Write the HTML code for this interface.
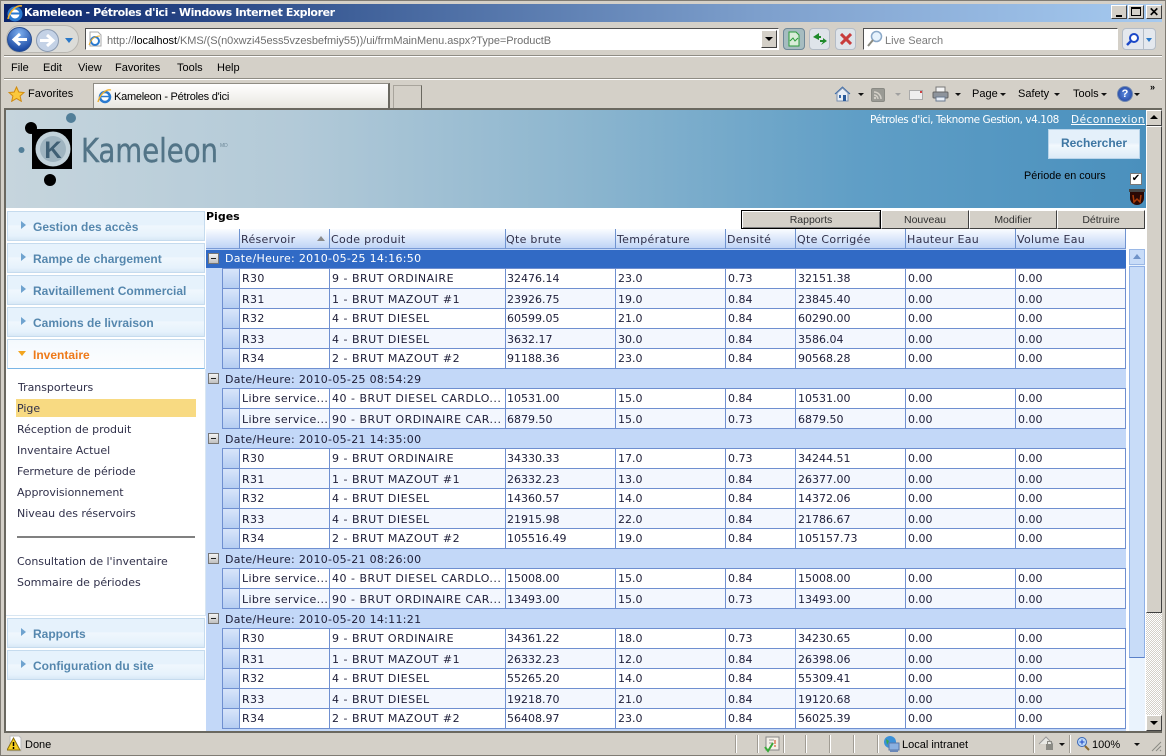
<!DOCTYPE html>
<html><head><meta charset="utf-8"><style>
*{box-sizing:border-box}
html,body{margin:0;padding:0;width:1166px;height:756px;overflow:hidden;background:#d4d0c8}
body{position:relative;font:11px "Liberation Sans",sans-serif;color:#000}
.a{position:absolute}
.t{position:absolute;white-space:nowrap;line-height:14px}
.menu{position:absolute;left:7px;width:198px;height:30px;background:linear-gradient(#e6f2fc 0,#e6f2fc 45%,#f0f7fd 50%,#e6f2fc 85%,#d8e8f6 100%);border:1px solid #c5dbee;font:bold 12px "Liberation Sans",sans-serif;color:#5587ae;padding:8px 0 0 25px;line-height:14px}
.menu:before{content:"";position:absolute;left:13px;top:9px;border-left:5px solid #6fa3cf;border-top:4px solid transparent;border-bottom:4px solid transparent}
.sub{position:absolute;left:17px;font:11px "DejaVu Sans",sans-serif;letter-spacing:-.03px;color:#30304a;line-height:14px;white-space:nowrap}
.btn{position:absolute;top:210px;height:19px;background:#d4d0c8;border:1px solid;border-color:#fff #404040 #404040 #fff;text-align:center;font:10.5px/19px "Liberation Sans",sans-serif;color:#303030}
.h{position:absolute;top:229px;height:20px;background:linear-gradient(#fafcff,#bfd4f6);border-right:1px solid #6f93d0;border-bottom:1px solid #7a9bd6;font:11px/21px "DejaVu Sans",sans-serif;letter-spacing:.3px;color:#30304a;padding-left:1px;white-space:nowrap}
.g{position:absolute;left:206px;width:920px;height:20px;background:#c3d8f8;font:11px/22px "DejaVu Sans",sans-serif;letter-spacing:.3px;color:#20203a;padding-left:19px;white-space:nowrap}
.g i{position:absolute;left:2px;top:4px;width:11px;height:11px;background:linear-gradient(#f4f4f4,#c0c0c0);border:1px solid #777}
.g i:after{content:"";position:absolute;left:2px;top:4px;width:5px;height:1px;background:#222}
.g.s{background:#316ac5;color:#fff;border-top:1px solid #c3d8f8;border-bottom:1px solid #c3d8f8;line-height:18px}
.g.s i{top:3px}
.r{position:absolute;left:222px;width:904px;height:20px;background:#fff;border-bottom:1px solid #6f8fd0;font:11px/19px "DejaVu Sans",sans-serif;color:#20203a;white-space:nowrap}
.r.o{background:#f3f7fe;line-height:21px}
.r b{font-weight:normal;position:absolute;top:0;height:19px;border-left:1px solid #6f8fd0;padding-left:2px;overflow:hidden}
.r b:nth-child(1){left:0;width:17px;padding:0;background:linear-gradient(#d8e5fa,#b5cdf2)}
.r b:nth-child(2){left:17px;width:90px;letter-spacing:.35px}
.r b:nth-child(3){left:107px;width:176px;letter-spacing:.5px}
.r b:nth-child(4){left:283px;width:110px;padding-left:1px}
.r b:nth-child(5){left:393px;width:110px}
.r b:nth-child(6){left:503px;width:70px}
.r b:nth-child(7){left:573px;width:110px}
.r b:nth-child(8){left:683px;width:110px}
.r b:nth-child(9){left:793px;width:111px;border-right:1px solid #6f8fd0}
.sep{position:absolute;top:735px;width:2px;height:18px;border-left:1px solid #a09c94;border-right:1px solid #fff}
</style></head><body>

<!-- Title bar -->
<div class="a" style="left:4px;top:4px;width:1158px;height:18px;background:linear-gradient(90deg,#0a246a,#3f6099 30%,#7d9fcc 65%,#a6caf0)"></div>
<svg class="a" style="left:6px;top:4px" width="18" height="18" viewBox="0 0 18 18"><circle cx="9" cy="10" r="6" fill="#fff" stroke="#2a7ad0" stroke-width="3"/><path d="M5 9.500h9" stroke="#2a7ad0" stroke-width="2"/><path d="M2 15C4 6 11 1 16 2" fill="none" stroke="#f0b030" stroke-width="1.600"/></svg>
<div class="t" style="left:24px;top:6px;color:#fff;font:bold 11px/14px 'DejaVu Sans',sans-serif;letter-spacing:-.42px">Kameleon - Pétroles d'ici - Windows Internet Explorer</div>
<div class="a" style="left:1111px;top:5px;width:16px;height:14px;background:#d4d0c8;border:1px solid;border-color:#fff #404040 #404040 #fff"><div class="a" style="left:4px;top:9px;width:6px;height:2px;background:#000"></div></div>
<div class="a" style="left:1128px;top:5px;width:16px;height:14px;background:#d4d0c8;border:1px solid;border-color:#fff #404040 #404040 #fff"><div class="a" style="left:2px;top:1px;width:10px;height:9px;border:1px solid #000;border-top-width:2px"></div></div>
<div class="a" style="left:1146px;top:5px;width:16px;height:14px;background:#d4d0c8;border:1px solid;border-color:#fff #404040 #404040 #fff;font:bold 12px/12px 'Liberation Sans',sans-serif;text-align:center">✕</div>

<!-- Nav -->
<div class="a" style="left:6px;top:25px;width:73px;height:28px;border-radius:14px;background:#dcdcd8;border:1px solid #b8b6b0"></div>
<svg class="a" style="left:7px;top:27px" width="25" height="25" viewBox="0 0 25 25"><defs><radialGradient id="b1" cx=".5" cy=".25" r=".8"><stop offset="0" stop-color="#7fb0ee"/><stop offset="1" stop-color="#0c3a98"/></radialGradient></defs><circle cx="12.500" cy="12.500" r="12" fill="url(#b1)" stroke="#2a4f90"/><path d="M20 12.500H8M13 7l-6 5.500 6 5.500" fill="none" stroke="#fff" stroke-width="3"/></svg>
<svg class="a" style="left:36px;top:29px" width="23" height="23" viewBox="0 0 23 23"><circle cx="11.500" cy="11.500" r="11" fill="#c4d2e6" stroke="#8a9ab0"/><path d="M4 11.500h12M11 6l6 5.500-6 5.500" fill="none" stroke="#fff" stroke-width="3"/></svg>
<div class="a" style="left:65px;top:38px;border-top:5px solid #2a78c8;border-left:4px solid transparent;border-right:4px solid transparent"></div>
<div class="a" style="left:85px;top:28px;width:694px;height:22px;background:#fff;border:1px solid;border-color:#505050 #fff #fff #505050"></div>
<svg class="a" style="left:87px;top:31px" width="16" height="16" viewBox="0 0 16 16"><path d="M3 1h8l3 3v11H3z" fill="#fff" stroke="#aaa"/><circle cx="8" cy="10" r="4" fill="none" stroke="#2a7ad0" stroke-width="2"/><path d="M2 14C4 8 8 5 13 5" stroke="#f0b030" fill="none"/></svg>
<div class="t" style="left:107px;top:34px;color:#6e6e6e;font-size:11px;letter-spacing:-.06px">http://<span style="color:#000">localhost</span>/KMS/(S(n0xwzi45ess5vzesbefmiy55))/ui/frmMainMenu.aspx?Type=ProductB</div>
<div class="a" style="left:761px;top:30px;width:16px;height:18px;background:#d4d0c8;border:1px solid;border-color:#fff #404040 #404040 #fff"><div class="a" style="left:3px;top:6px;border-top:4px solid #000;border-left:4px solid transparent;border-right:4px solid transparent"></div></div>
<div class="a" style="left:783px;top:28px;width:22px;height:22px;border-radius:4px;background:#a6bcc0;border:1px solid #6f8898"></div>
<svg class="a" style="left:787px;top:31px" width="14" height="16" viewBox="0 0 14 16"><path d="M2 1h7l3 3v11H2z" fill="#d8ecd8" stroke="#2a9a3a"/><path d="M3 10l3-3 2 3 3-3" stroke="#2a9a3a" fill="none"/></svg>
<div class="a" style="left:809px;top:28px;width:21px;height:22px;border-radius:4px;background:#dfe4ea;border:1px solid #b4bcc6"></div>
<svg class="a" style="left:812px;top:32px" width="16" height="14" viewBox="0 0 16 14"><path d="M7 1L1 5l6 3V6h2V4H7zM9 13l6-4-4-3v2H8v2h3z" fill="#1e8a2a"/></svg>
<div class="a" style="left:835px;top:28px;width:21px;height:22px;border-radius:4px;background:#dfe4ea;border:1px solid #b4bcc6"></div>
<svg class="a" style="left:840px;top:33px" width="12" height="12" viewBox="0 0 12 12"><path d="M1 1l10 10M11 1L1 11" stroke="#c83c3c" stroke-width="3"/></svg>
<div class="a" style="left:863px;top:28px;width:255px;height:22px;background:#fff;border:1px solid;border-color:#505050 #fff #fff #505050"></div>
<svg class="a" style="left:866px;top:30px" width="17" height="18" viewBox="0 0 17 18"><circle cx="10.500" cy="6.500" r="5" fill="#e6f2fc" stroke="#8aa8c8" stroke-width="1.500"/><path d="M7 10l-5 6" stroke="#8a8a80" stroke-width="2"/></svg>
<div class="t" style="left:885px;top:34px;color:#7a7a7a;font-size:11px">Live Search</div>
<div class="a" style="left:1122px;top:28px;width:34px;height:22px;border-radius:4px;background:#e4e8ee;border:1px solid #b4bcc6"></div>
<div class="a" style="left:1143px;top:29px;width:1px;height:20px;background:#b4bcc6"></div>
<svg class="a" style="left:1125px;top:32px" width="15" height="15" viewBox="0 0 15 15"><circle cx="9" cy="6" r="4" fill="#fff" stroke="#1c48c8" stroke-width="2"/><path d="M6 9l-4 4" stroke="#1c48c8" stroke-width="2.500"/></svg>
<div class="a" style="left:1146px;top:38px;border-top:4px solid #2a78c8;border-left:3px solid transparent;border-right:3px solid transparent"></div>
<div class="a" style="left:4px;top:55px;width:1158px;height:2px;border-top:1px solid #8f8c84;border-bottom:1px solid #fff"></div>

<!-- Menu bar -->
<div class="t" style="left:11px;top:61px">File</div>
<div class="t" style="left:43px;top:61px">Edit</div>
<div class="t" style="left:78px;top:61px">View</div>
<div class="t" style="left:115px;top:61px">Favorites</div>
<div class="t" style="left:177px;top:61px">Tools</div>
<div class="t" style="left:217px;top:61px">Help</div>
<div class="a" style="left:4px;top:78px;width:1158px;height:2px;border-top:1px solid #8f8c84;border-bottom:1px solid #fff"></div>

<!-- Favorites bar -->
<svg class="a" style="left:8px;top:86px" width="17" height="16" viewBox="0 0 17 16"><path d="M8.500 1l2.300 5 5.200.5-3.900 3.500 1.200 5.300-4.800-2.800-4.800 2.800 1.200-5.300L1 6.500 6.200 6z" fill="#fbc83c" stroke="#d08a10"/></svg>
<div class="t" style="left:28px;top:87px">Favorites</div>
<div class="a" style="left:93px;top:83px;width:297px;height:25px;background:linear-gradient(#fff,#e8e6e0);border:1px solid #8f8c84;border-bottom:none;border-right:2px solid #6a6860"></div>
<svg class="a" style="left:97px;top:88px" width="16" height="16" viewBox="0 0 16 16"><circle cx="8" cy="9" r="5" fill="#fff" stroke="#2a7ad0" stroke-width="2.500"/><path d="M4 8.500h8" stroke="#2a7ad0" stroke-width="1.500"/><path d="M1 14C3 6 9 1 14 2" fill="none" stroke="#f0b030" stroke-width="1.400"/></svg>
<div class="t" style="left:114px;top:90px;letter-spacing:-.25px">Kameleon - Pétroles d'ici</div>
<div class="a" style="left:393px;top:85px;width:29px;height:23px;background:#d4d0c8;border:1px solid #a8a49c;border-bottom:none;border-right-color:#6a6860"></div>
<svg class="a" style="left:834px;top:85px" width="17" height="17" viewBox="0 0 17 17"><path d="M1 9l7.500-7L16 9" fill="#8ab0e0" stroke="#3a6aa8"/><path d="M3 8v8h11V8L8.500 3z" fill="#e8eef6" stroke="#7a90b0"/><rect x="9" y="10" width="3" height="6" fill="#2a5a9a"/><rect x="5" y="10" width="2" height="3" fill="#3a6aa8"/></svg>
<div class="a" style="left:858px;top:93px;border-top:3px solid #111;border-left:3px solid transparent;border-right:3px solid transparent"></div>
<div class="a" style="left:871px;top:88px;width:14px;height:14px;background:#9a9a94;border-radius:2px;border:1px solid #8a8a84"></div>
<svg class="a" style="left:872px;top:89px" width="12" height="12" viewBox="0 0 12 12"><path d="M2 3a7 7 0 0 1 7 7M2 6a4 4 0 0 1 4 4" fill="none" stroke="#d4d0c8" stroke-width="1.500"/><circle cx="3" cy="9" r="1.200" fill="#d4d0c8"/></svg>
<div class="a" style="left:895px;top:93px;border-top:3px solid #a0a0a0;border-left:3px solid transparent;border-right:3px solid transparent"></div>
<div class="a" style="left:909px;top:90px;width:14px;height:10px;background:#eee;border:1px solid #aaa"><div class="a" style="right:0;top:0;width:2px;height:2px;background:#d04040"></div></div>
<svg class="a" style="left:932px;top:86px" width="17" height="16" viewBox="0 0 17 16"><rect x="4" y="1" width="9" height="5" fill="#f4f4f4" stroke="#777"/><rect x="1" y="6" width="15" height="6" rx="1" fill="#8e949c" stroke="#666"/><rect x="4" y="11" width="9" height="4" fill="#e8eef6" stroke="#6a7a90"/></svg>
<div class="a" style="left:955px;top:93px;border-top:3px solid #111;border-left:3px solid transparent;border-right:3px solid transparent"></div>
<div class="t" style="left:972px;top:87px">Page</div><div class="a" style="left:1000px;top:93px;border-top:3px solid #111;border-left:3px solid transparent;border-right:3px solid transparent"></div>
<div class="t" style="left:1018px;top:87px">Safety</div><div class="a" style="left:1054px;top:93px;border-top:3px solid #111;border-left:3px solid transparent;border-right:3px solid transparent"></div>
<div class="t" style="left:1073px;top:87px">Tools</div><div class="a" style="left:1101px;top:93px;border-top:3px solid #111;border-left:3px solid transparent;border-right:3px solid transparent"></div>
<div class="a" style="left:1117px;top:86px;width:16px;height:16px;border-radius:50%;background:radial-gradient(#5a8ae0,#1c3c98);border:1px solid #7088b0;color:#fff;font:bold 11px/14px 'Liberation Sans',sans-serif;text-align:center">?</div>
<div class="a" style="left:1134px;top:93px;border-top:3px solid #111;border-left:3px solid transparent;border-right:3px solid transparent"></div>
<div class="t" style="left:1150px;top:81px;font:bold 9px/12px 'Liberation Sans',sans-serif">»</div>

<!-- Page -->
<div class="a" style="left:4px;top:108px;width:1158px;height:2px;background:#6a6860"></div>
<div class="a" style="left:4px;top:110px;width:2px;height:621px;background:#6a6860"></div>
<div class="a" style="left:6px;top:110px;width:1140px;height:621px;background:#fff"></div>
<div class="a" style="left:6px;top:110px;width:1140px;height:98px;background:linear-gradient(90deg,#c6d5dd 0,#b3cad8 25%,#8db6cf 50%,#5f9ec6 75%,#4a90bd 100%)"></div>

<!-- Logo -->
<svg class="a" style="left:6px;top:110px" width="230" height="80" viewBox="0 0 230 80">
<rect x="26" y="19" width="40" height="40" fill="#000"/>
<circle cx="25" cy="18" r="6" fill="#000"/>
<circle cx="65" cy="8" r="5" fill="#527f99"/>
<circle cx="15.500" cy="40" r="3" fill="#527f99"/>
<circle cx="47" cy="39" r="17.500" fill="#c2d2da"/>
<circle cx="47" cy="39" r="13" fill="#9fb4c0"/>
<text x="47" y="48" font-family="Liberation Sans,sans-serif" font-size="24" font-weight="bold" fill="#3f5f74" text-anchor="middle">K</text>
<text x="75" y="52" font-family="DejaVu Sans,sans-serif" font-size="33" fill="#527487" stroke="#527487" stroke-width=".4" textLength="137" lengthAdjust="spacingAndGlyphs">Kameleon</text>
<text x="214" y="37" font-family="Liberation Sans,sans-serif" font-size="5" fill="#6f8a9a">MD</text>
</svg>
<div class="a" style="left:44px;top:174px;width:12px;height:12px;border-radius:50%;background:#000"></div>

<div class="t" style="left:870px;top:113px;color:#fff;font:10.500px/14px 'DejaVu Sans',sans-serif;letter-spacing:-.45px">Pétroles d'ici, Teknome Gestion, v4.108</div>
<div class="t" style="left:1071px;top:113px;color:#fff;font:10.500px/14px 'DejaVu Sans',sans-serif;letter-spacing:.5px;text-decoration:underline">Déconnexion</div>
<div class="a" style="left:1048px;top:129px;width:92px;height:30px;background:linear-gradient(#e4f0fa,#e4f0fa 45%,#f2f8fd 55%,#dcebf7);border:1px solid #b8d4ea;text-align:center;font:bold 12px/27px 'Liberation Sans',sans-serif;color:#3f77a3">Rechercher</div>
<div class="t" style="left:1024px;top:169px;font-size:10.800px">Période en cours</div>
<div class="a" style="left:1130px;top:173px;width:12px;height:12px;background:#fff;border:1px solid #777;font:bold 10px/10px 'DejaVu Sans',sans-serif;text-align:center">✔</div>
<svg class="a" style="left:1129px;top:189px" width="16" height="17" viewBox="0 0 16 17"><path d="M1 1h14v8a7 7 0 0 1-14 0z" fill="#2a0804"/><path d="M0 0h16v3H0z" fill="#444"/><path d="M4 6l1 7 3-3 3 3 1-7" fill="none" stroke="#a83a08" stroke-width="1.500"/></svg>

<!-- Sidebar -->
<div class="menu" style="top:211px">Gestion des accès</div>
<div class="menu" style="top:243px">Rampe de chargement</div>
<div class="menu" style="top:275px">Ravitaillement Commercial</div>
<div class="menu" style="top:307px">Camions de livraison</div>
<div class="a" style="left:7px;top:339px;width:198px;height:30px;background:linear-gradient(#f4f9fd,#fdfeff);border:1px solid #c5dbee;border-bottom:1px solid #7ab6e6;font:bold 12px/30px 'Liberation Sans',sans-serif;color:#ee7a1a;padding-left:25px">Inventaire</div>
<div class="a" style="left:18px;top:351px;border-top:5px solid #f2a520;border-left:4px solid transparent;border-right:4px solid transparent"></div>
<div class="a" style="left:6px;top:369px;width:200px;height:247px;border:1px solid #d8e6f2;border-top:none;border-left:none;background:#fff"></div>
<div class="a" style="left:16px;top:399px;width:180px;height:18px;background:#f8da82"></div>
<div class="sub" style="top:381px;left:18px">Transporteurs</div>
<div class="sub" style="top:402px">Pige</div>
<div class="sub" style="top:423px">Réception de produit</div>
<div class="sub" style="top:444px">Inventaire Actuel</div>
<div class="sub" style="top:465px">Fermeture de période</div>
<div class="sub" style="top:486px">Approvisionnement</div>
<div class="sub" style="top:507px">Niveau des réservoirs</div>
<div class="a" style="left:17px;top:536px;width:178px;height:2px;background:#808080"></div>
<div class="sub" style="top:555px">Consultation de l'inventaire</div>
<div class="sub" style="top:576px">Sommaire de périodes</div>
<div class="menu" style="top:618px">Rapports</div>
<div class="menu" style="top:650px">Configuration du site</div>

<!-- Pages toolbar -->
<div class="t" style="left:206px;top:210px;font:bold 11px/14px 'DejaVu Sans',sans-serif">Piges</div>
<div class="btn" style="left:741px;width:140px;border:1px solid #000;box-shadow:inset 1px 1px 0 #fff,inset -1px -1px 0 #808080">Rapports</div>
<div class="btn" style="left:881px;width:88px">Nouveau</div>
<div class="btn" style="left:969px;width:88px">Modifier</div>
<div class="btn" style="left:1057px;width:88px">Détruire</div>

<!-- Grid -->
<div class="a" style="left:206px;top:229px;width:923px;height:502px;background:#c3d8f8"></div>
<div class="a" style="left:1126px;top:229px;width:20px;height:502px;background:#fff"></div>
<div class="h" style="left:206px;width:34px"></div>
<div class="h" style="left:240px;width:90px">Réservoir</div>
<div class="a" style="left:317px;top:236px;border-bottom:5px solid #8a8a8a;border-left:4px solid transparent;border-right:4px solid transparent"></div>
<div class="h" style="left:330px;width:176px">Code produit</div>
<div class="h" style="left:506px;width:110px;padding-left:0">Qte brute</div>
<div class="h" style="left:616px;width:110px">Température</div>
<div class="h" style="left:726px;width:70px">Densité</div>
<div class="h" style="left:796px;width:110px">Qte Corrigée</div>
<div class="h" style="left:906px;width:110px">Hauteur Eau</div>
<div class="h" style="left:1016px;width:110px">Volume Eau</div>

<div class="g s" style="top:249px"><i></i>Date/Heure: 2010-05-25 14:16:50</div>
<div class="r" style="top:269px"><b></b><b>R30</b><b>9 - BRUT ORDINAIRE</b><b>32476.14</b><b>23.0</b><b>0.73</b><b>32151.38</b><b>0.00</b><b>0.00</b></div>
<div class="r o" style="top:289px"><b></b><b>R31</b><b>1 - BRUT MAZOUT #1</b><b>23926.75</b><b>19.0</b><b>0.84</b><b>23845.40</b><b>0.00</b><b>0.00</b></div>
<div class="r" style="top:309px"><b></b><b>R32</b><b>4 - BRUT DIESEL</b><b>60599.05</b><b>21.0</b><b>0.84</b><b>60290.00</b><b>0.00</b><b>0.00</b></div>
<div class="r o" style="top:329px"><b></b><b>R33</b><b>4 - BRUT DIESEL</b><b>3632.17</b><b>30.0</b><b>0.84</b><b>3586.04</b><b>0.00</b><b>0.00</b></div>
<div class="r" style="top:349px"><b></b><b>R34</b><b>2 - BRUT MAZOUT #2</b><b>91188.36</b><b>23.0</b><b>0.84</b><b>90568.28</b><b>0.00</b><b>0.00</b></div>

<div class="g" style="top:369px"><i></i>Date/Heure: 2010-05-25 08:54:29</div>
<div class="r" style="top:389px"><b></b><b>Libre service...</b><b>40 - BRUT DIESEL CARDLO...</b><b>10531.00</b><b>15.0</b><b>0.84</b><b>10531.00</b><b>0.00</b><b>0.00</b></div>
<div class="r o" style="top:409px"><b></b><b>Libre service...</b><b>90 - BRUT ORDINAIRE CAR...</b><b>6879.50</b><b>15.0</b><b>0.73</b><b>6879.50</b><b>0.00</b><b>0.00</b></div>

<div class="g" style="top:429px"><i></i>Date/Heure: 2010-05-21 14:35:00</div>
<div class="r" style="top:449px"><b></b><b>R30</b><b>9 - BRUT ORDINAIRE</b><b>34330.33</b><b>17.0</b><b>0.73</b><b>34244.51</b><b>0.00</b><b>0.00</b></div>
<div class="r o" style="top:469px"><b></b><b>R31</b><b>1 - BRUT MAZOUT #1</b><b>26332.23</b><b>13.0</b><b>0.84</b><b>26377.00</b><b>0.00</b><b>0.00</b></div>
<div class="r" style="top:489px"><b></b><b>R32</b><b>4 - BRUT DIESEL</b><b>14360.57</b><b>14.0</b><b>0.84</b><b>14372.06</b><b>0.00</b><b>0.00</b></div>
<div class="r o" style="top:509px"><b></b><b>R33</b><b>4 - BRUT DIESEL</b><b>21915.98</b><b>22.0</b><b>0.84</b><b>21786.67</b><b>0.00</b><b>0.00</b></div>
<div class="r" style="top:529px"><b></b><b>R34</b><b>2 - BRUT MAZOUT #2</b><b>105516.49</b><b>19.0</b><b>0.84</b><b>105157.73</b><b>0.00</b><b>0.00</b></div>

<div class="g" style="top:549px"><i></i>Date/Heure: 2010-05-21 08:26:00</div>
<div class="r" style="top:569px"><b></b><b>Libre service...</b><b>40 - BRUT DIESEL CARDLO...</b><b>15008.00</b><b>15.0</b><b>0.84</b><b>15008.00</b><b>0.00</b><b>0.00</b></div>
<div class="r o" style="top:589px"><b></b><b>Libre service...</b><b>90 - BRUT ORDINAIRE CAR...</b><b>13493.00</b><b>15.0</b><b>0.73</b><b>13493.00</b><b>0.00</b><b>0.00</b></div>

<div class="g" style="top:609px"><i></i>Date/Heure: 2010-05-20 14:11:21</div>
<div class="r" style="top:629px"><b></b><b>R30</b><b>9 - BRUT ORDINAIRE</b><b>34361.22</b><b>18.0</b><b>0.73</b><b>34230.65</b><b>0.00</b><b>0.00</b></div>
<div class="r o" style="top:649px"><b></b><b>R31</b><b>1 - BRUT MAZOUT #1</b><b>26332.23</b><b>12.0</b><b>0.84</b><b>26398.06</b><b>0.00</b><b>0.00</b></div>
<div class="r" style="top:669px"><b></b><b>R32</b><b>4 - BRUT DIESEL</b><b>55265.20</b><b>14.0</b><b>0.84</b><b>55309.41</b><b>0.00</b><b>0.00</b></div>
<div class="r o" style="top:689px"><b></b><b>R33</b><b>4 - BRUT DIESEL</b><b>19218.70</b><b>21.0</b><b>0.84</b><b>19120.68</b><b>0.00</b><b>0.00</b></div>
<div class="r" style="top:709px"><b></b><b>R34</b><b>2 - BRUT MAZOUT #2</b><b>56408.97</b><b>23.0</b><b>0.84</b><b>56025.39</b><b>0.00</b><b>0.00</b></div>
<div class="a" style="left:222px;top:268px;width:904px;height:1px;background:#6f8fd0"></div>
<div class="a" style="left:222px;top:388px;width:904px;height:1px;background:#6f8fd0"></div>
<div class="a" style="left:222px;top:448px;width:904px;height:1px;background:#6f8fd0"></div>
<div class="a" style="left:222px;top:568px;width:904px;height:1px;background:#6f8fd0"></div>
<div class="a" style="left:222px;top:628px;width:904px;height:1px;background:#6f8fd0"></div>

<!-- Inner scrollbar -->
<div class="a" style="left:1129px;top:249px;width:16px;height:482px;background:#eaf3fd"></div>
<div class="a" style="left:1129px;top:249px;width:16px;height:16px;background:#c8dcf8;border:1px solid #9ab8e6"><div class="a" style="left:3px;top:4px;border-bottom:5px solid #6f93c8;border-left:4px solid transparent;border-right:4px solid transparent"></div></div>
<div class="a" style="left:1129px;top:266px;width:16px;height:392px;background:#c8dcf8;border:1px solid #8fb0e6;border-bottom:1px solid #5a80c8"></div>

<!-- Outer scrollbar -->
<div class="a" style="left:1146px;top:110px;width:16px;height:621px;background:repeating-conic-gradient(#d4d0c8 0 25%,#fff 0 50%) 0 0/2px 2px"></div>
<div class="a" style="left:1146px;top:110px;width:16px;height:16px;background:#d4d0c8;border:1px solid;border-color:#fff #404040 #404040 #fff"><div class="a" style="left:3px;top:4px;border-bottom:4px solid #000;border-left:4px solid transparent;border-right:4px solid transparent"></div></div>
<div class="a" style="left:1146px;top:126px;width:16px;height:487px;background:#d4d0c8;border:1px solid;border-color:#fff #404040 #404040 #fff"></div>
<div class="a" style="left:1146px;top:715px;width:16px;height:16px;background:#d4d0c8;border:1px solid;border-color:#fff #404040 #404040 #fff"><div class="a" style="left:3px;top:5px;border-top:4px solid #000;border-left:4px solid transparent;border-right:4px solid transparent"></div></div>

<!-- Status bar -->
<div class="a" style="left:4px;top:731px;width:1158px;height:2px;background:#6a6860"></div>
<svg class="a" style="left:7px;top:735px" width="15" height="17" viewBox="0 0 15 17"><path d="M3 1h9l2 2v13H3z" fill="#fff" stroke="#bbb"/><path d="M6.500 3L13 15H0z" fill="#f7d020" stroke="#8a7010"/><path d="M6.500 7v4M6.500 12v2" stroke="#000" stroke-width="1.500"/></svg>
<div class="t" style="left:25px;top:738px">Done</div>
<div class="sep" style="left:735px"></div><div class="sep" style="left:757px"></div>
<svg class="a" style="left:763px;top:736px" width="17" height="17" viewBox="0 0 17 17"><rect x="3" y="1" width="13" height="13" fill="#f4f0e8" stroke="#888"/><path d="M6 4h5M6 7h4" stroke="#999"/><path d="M12 4v4M12 9v2" stroke="#d04010"/><path d="M2 11l3 4 5-8" fill="none" stroke="#38a838" stroke-width="2"/></svg>
<div class="sep" style="left:783px"></div><div class="sep" style="left:805px"></div><div class="sep" style="left:829px"></div><div class="sep" style="left:853px"></div><div class="sep" style="left:877px"></div>
<svg class="a" style="left:883px;top:735px" width="17" height="18" viewBox="0 0 17 18"><circle cx="7" cy="7" r="6" fill="#3a90d8"/><path d="M3 4l3 2-2 4z" fill="#3aa84a"/><rect x="6" y="8" width="10" height="7" fill="#8ab0e0" stroke="#5a78a8"/><rect x="7" y="15" width="8" height="2" fill="#6a88b8"/></svg>
<div class="t" style="left:902px;top:738px">Local intranet</div>
<div class="sep" style="left:1033px"></div>
<svg class="a" style="left:1038px;top:736px" width="18" height="16" viewBox="0 0 18 16"><path d="M1 8l7-7 7 7" fill="#e8e8e4" stroke="#999"/><rect x="8" y="8" width="7" height="6" fill="#8a8a84"/><path d="M9.500 8V5.500h4V8" fill="none" stroke="#8a8a84"/></svg>
<div class="a" style="left:1059px;top:743px;border-top:3px solid #111;border-left:3px solid transparent;border-right:3px solid transparent"></div>
<div class="sep" style="left:1069px"></div>
<svg class="a" style="left:1076px;top:736px" width="15" height="16" viewBox="0 0 15 16"><circle cx="6" cy="6" r="4.500" fill="#bcd8f8" stroke="#3a68b8"/><path d="M6 3.500v5M3.500 6h5" stroke="#1c48c8"/><path d="M9 10l4 4" stroke="#8a6a30" stroke-width="2"/></svg>
<div class="t" style="left:1092px;top:738px">100%</div>
<div class="a" style="left:1134px;top:743px;border-top:3px solid #111;border-left:3px solid transparent;border-right:3px solid transparent"></div>
<svg class="a" style="left:1151px;top:741px" width="11" height="11" viewBox="0 0 11 11"><path d="M10 1L1 10M10 5l-5 5M10 9l-1 1" stroke="#8a8a84"/></svg>
<div class="a" style="left:0;top:0;width:1166px;height:756px;border:4px solid #d4d0c8;border-bottom-width:3px;outline:1px solid #807c74;outline-offset:-1px;pointer-events:none"></div>
</body></html>
